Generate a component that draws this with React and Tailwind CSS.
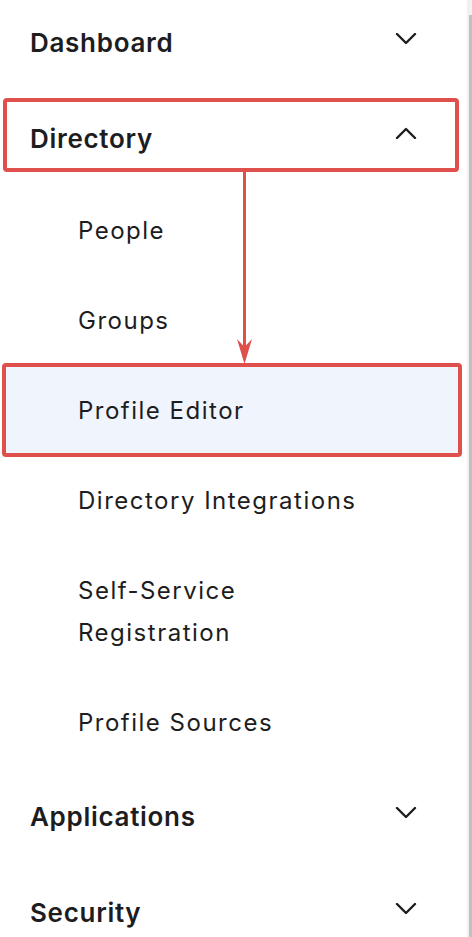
import React from "react";

const font = { fontFamily: "Inter, 'Noto Sans', sans-serif" };

function Chevron({ up }) {
  return (
    <svg width="22" height="12" viewBox="0 0 22 12" className="block">
      <path
        d={up ? "M2 11 L11 2 L20 11" : "M2 1 L11 10 L20 1"}
        fill="none"
        stroke="#1d1d21"
        strokeWidth="2.4"
        strokeLinecap="round"
        strokeLinejoin="round"
      />
    </svg>
  );
}

function Header({ label, up, children }) {
  return (
    <div className="relative h-[96px] flex items-center justify-between pl-[30px] pr-[50px]">
      {children}
      <span className="relative text-[26px] font-semibold text-[#1d1d21] tracking-[0.7px]">{label}</span>
      <span className={up ? "relative -mt-[10px]" : "relative -mt-[7px]"}>
        <Chevron up={up} />
      </span>
    </div>
  );
}

function Item({ label, children }) {
  return (
    <div className="relative py-[24px] pl-[78px] pr-[40px] text-[24px] leading-[42px] text-[#1d1d21] tracking-[1.5px]">
      {children}
      <span className="relative">{label}</span>
    </div>
  );
}

export default function App() {
  return (
    <div className="flex h-[937px] w-[472px] overflow-hidden bg-white" style={font}>
      <div className="relative flex-1">
        <div className="-mt-[6px] flex flex-col">
          <Header label="Dashboard" />
          <Header label="Directory" up>
            <div className="absolute left-[3px] top-[8px] w-[456px] h-[74px] border-[4px] border-[#df4f4c] rounded-[4px]" />
          </Header>
          <Item label="People" />
          <Item label="Groups" />
          <div className="relative">
            <div className="absolute -top-[3px] -bottom-[1px] left-[2px] right-[5px] bg-[#f0f4fd] border-[4px] border-[#df4f4c] rounded-[4px]" />
            <Item label="Profile Editor" />
          </div>
          <Item label="Directory Integrations" />
          <Item
            label={
              <>
                Self-Service
                <br />
                Registration
              </>
            }
          />
          <Item label="Profile Sources" />
          <Header label="Applications" />
          <Header label="Security" />
        </div>
        <svg
          className="absolute left-[230px] top-[170px]"
          width="30"
          height="196"
          viewBox="0 0 30 196"
        >
          <line x1="14.5" y1="2" x2="14.5" y2="180" stroke="#df4f4c" strokeWidth="3" />
          <path d="M7 169 L14.5 177 L22 169 L14.5 194 Z" fill="#df4f4c" />
        </svg>
      </div>
      <div className="w-[5px] h-full bg-[#f1f1f1] flex justify-end pt-[15px]">
        <div className="w-[3px] h-full bg-[#c1c1c1]" />
      </div>
    </div>
  );
}
